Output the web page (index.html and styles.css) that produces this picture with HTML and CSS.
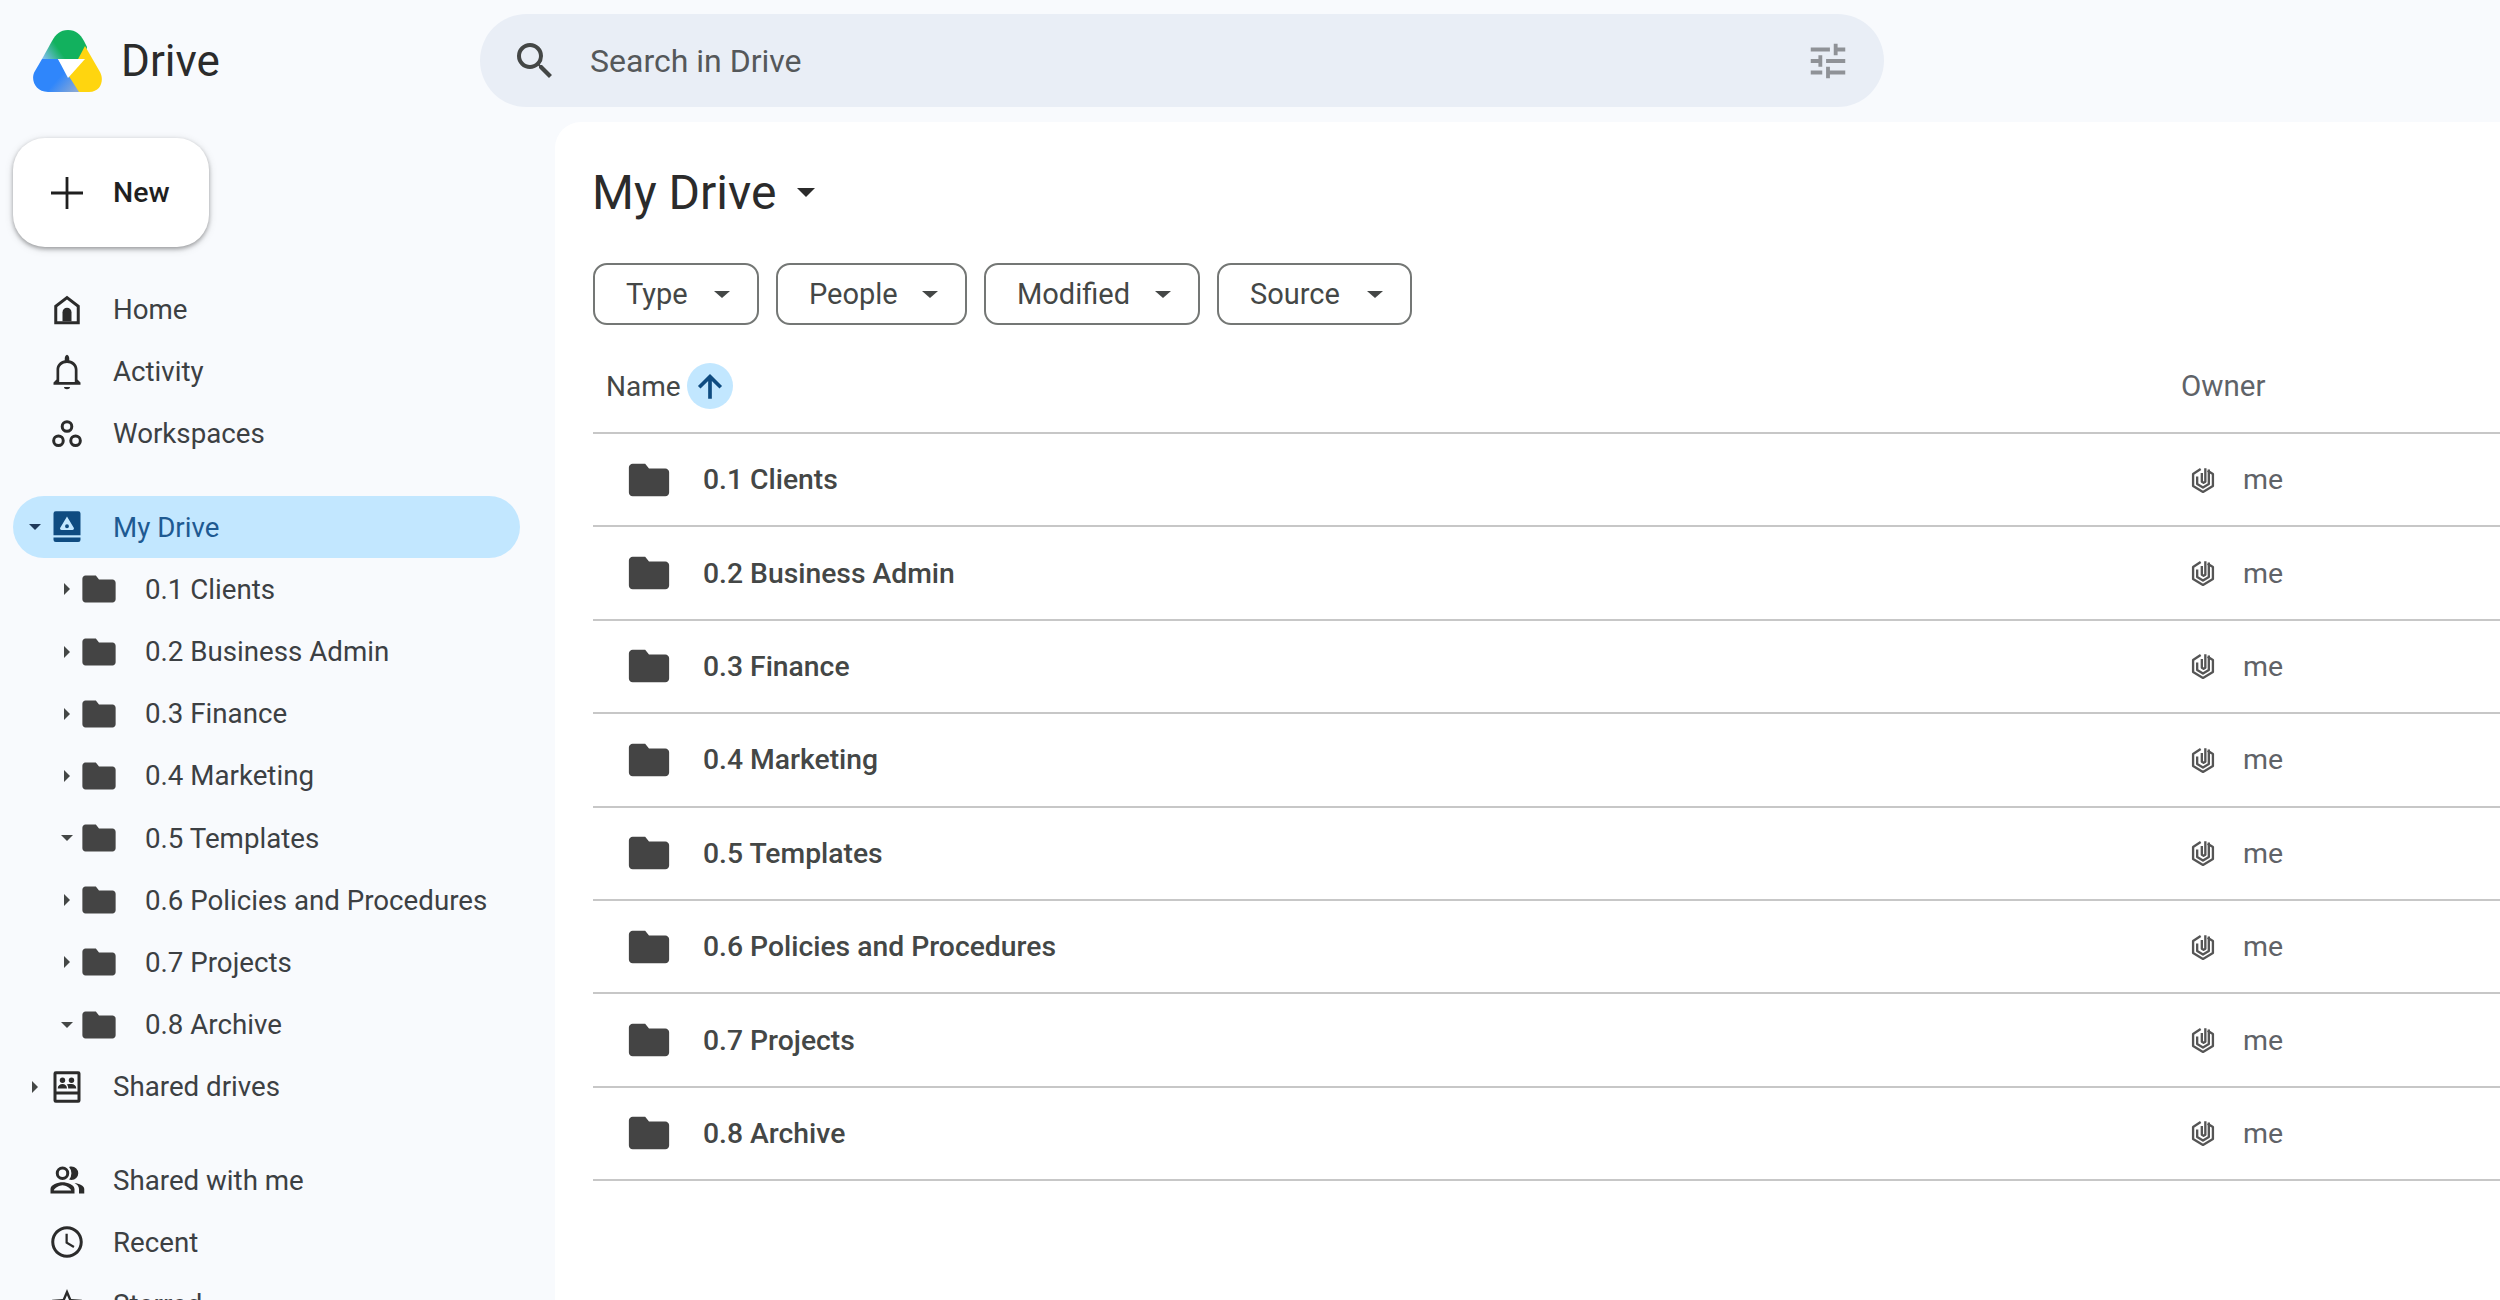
FILE: index.html
```html
<!DOCTYPE html>
<html lang="en">
<head>
    <meta charset="UTF-8">
    <title>My Drive - Google Drive</title>
    <link rel="stylesheet" href="styles.css">
</head>
<body>
    <svg class="sprite" xmlns="http://www.w3.org/2000/svg">
        <symbol id="i-search" viewBox="0 0 24 24"><path d="M15.5 14h-.79l-.28-.27A6.471 6.471 0 0 0 16 9.5 6.5 6.5 0 1 0 9.5 16c1.61 0 3.09-.59 4.23-1.57l.27.28v.79l5 4.99L20.49 19l-4.99-5zm-6 0C7.01 14 5 11.99 5 9.5S7.01 5 9.5 5 14 7.01 14 9.5 11.99 14 9.5 14z"/></symbol>
        <symbol id="i-tune" viewBox="0 0 24 24"><path d="M3 17v2h6v-2H3zM3 5v2h10V5H3zm10 16v-2h8v-2h-8v-2h-2v6h2zM7 9v2H3v2h4v2h2V9H7zm14 4v-2H11v2h10zm-6-4h2V7h4V5h-4V3h-2v6z"/></symbol>
        <symbol id="i-add" viewBox="0 0 24 24"><path d="M20 12.7h-7.3V20h-1.4v-7.3H4v-1.4h7.3V4h1.4v7.3H20z"/></symbol>
        <symbol id="i-home" viewBox="0 0 24 24"><path d="M12 2.5 3.5 9v12.5h17V9L12 2.5zm6.5 17h-13v-9.5L12 5l6.5 5v9.5z"/><path d="M9 13.5a3 3 0 0 1 6 0v6H9z"/></symbol>
        <symbol id="i-bell" viewBox="0 0 24 24"><path d="M12 23.500c1.100 0 2-.5 2-1.500h-4c0 1 .9 1.500 2 1.500zM19 17v-6.500c0-3.070-1.900-5.640-5.500-6.320V3c0-1-.670-2.500-1.500-2.500S10.500 2 10.500 3v1.180C6.900 4.860 5 7.420 5 10.500V17l-2 2v1.500h18V19l-2-2zm-1.800 1.700H6.800V10.500C6.800 8 9 6 12 6s5.200 2 5.200 4.500v8.200z"/></symbol>
        <symbol id="i-workspaces" viewBox="0 0 24 24"><g fill="none" stroke="currentColor" stroke-width="2"><circle cx="12" cy="7" r="3.200"/><circle cx="6.300" cy="16.500" r="3.200"/><circle cx="17.700" cy="16.500" r="3.200"/></g></symbol>
        <symbol id="i-mydrive" viewBox="0 0 24 24"><path fill-rule="evenodd" d="M4.500 1.500h15A1.500 1.500 0 0 1 21 3v14.500H3V3a1.500 1.500 0 0 1 1.500-1.500zM12 5 7.500 12.500a1 1 0 0 0 .9 1.500h7.200a1 1 0 0 0 .9-1.500L12 5zm0 5.200a1.300 1.300 0 1 1 0 2.600 1.300 1.300 0 0 1 0-2.600z"/><path d="M3 19h18v1.500a1.500 1.500 0 0 1-1.500 1.500h-15A1.500 1.500 0 0 1 3 20.500z"/></symbol>
        <symbol id="i-shared-drives" viewBox="0 0 24 24"><path fill-rule="evenodd" d="M4.500 1.500h15A1.500 1.500 0 0 1 21 3v18a1.500 1.500 0 0 1-1.500 1.500h-15A1.500 1.500 0 0 1 3 21V3a1.500 1.500 0 0 1 1.500-1.500zM5 3.500V15h14V3.500zm0 13.500v3.500h14V17z"/><circle cx="9" cy="7.500" r="1.800"/><circle cx="15" cy="7.500" r="1.800"/><path d="M5.800 13c0-2 1.500-3 3.200-3s3 1 3 3zM12.800 13c0-1.200-.3-2-1-2.600.9-.4 2.200-.4 3.200-.4 1.700 0 3.200 1 3.200 3z"/></symbol>
        <symbol id="i-people" viewBox="0 0 24 24"><path d="M9 12a4.500 4.500 0 1 0 0-9 4.500 4.500 0 0 0 0 9zm0-7a2.500 2.500 0 1 1 0 5 2.500 2.500 0 0 1 0-5zM9 13.500c-3 0-8 1.500-8 4.500v3h16v-3c0-3-5-4.500-8-4.500zM3.200 19c.4-1.600 3.700-3.500 5.800-3.500s5.400 1.900 5.800 3.500z"/><path d="M15 3c-.6 0-1.100.100-1.600.300a6.500 6.500 0 0 1 0 8.400c.5.200 1 .300 1.600.300a4.500 4.500 0 1 0 0-9zM17 14c1.800 1 3 2.300 3 4v3h3.500v-3c0-2.300-3.500-3.600-6.500-4z"/></symbol>
        <symbol id="i-clock" viewBox="0 0 24 24"><path d="M11.990 1.500C6.200 1.500 1.500 6.200 1.500 12s4.700 10.500 10.490 10.500C17.800 22.500 22.500 17.800 22.500 12S17.800 1.500 11.990 1.500zM12 20.500c-4.700 0-8.500-3.800-8.500-8.500S7.300 3.500 12 3.500s8.500 3.800 8.500 8.500-3.800 8.500-8.500 8.500zm.5-14H11v6.300l5.250 3.150.75-1.230-4.500-2.670z"/></symbol>
        <symbol id="i-star" viewBox="0 0 24 24"><path d="M22 9.240l-7.190-.62L12 2 9.190 8.630 2 9.240l5.460 4.730L5.820 21 12 17.270 18.180 21l-1.630-7.030L22 9.240zM12 15.400l-3.760 2.270 1-4.280-3.320-2.880 4.380-.38L12 6.100l1.710 4.040 4.380.38-3.320 2.880 1 4.280L12 15.400z"/></symbol>
        <symbol id="i-folder" viewBox="0 0 24 24"><path d="M10 3.500H3.500C2.400 3.500 1.500 4.400 1.500 5.500v13c0 1.100.9 2 2 2h17c1.100 0 2-.9 2-2V8c0-1.100-.9-2-2-2H12l-2-2.500z"/></symbol>
        <symbol id="i-arrow-up" viewBox="0 0 24 24"><path d="M3.500 12l1.800 1.800L10.700 8.400V21h2.600V8.400l5.400 5.400 1.800-1.800L12 3.500 3.500 12z"/></symbol>
        <symbol id="i-owner" viewBox="0 0 24 24"><g fill="none" stroke="currentColor" stroke-width="2" stroke-linejoin="round"><path d="M10 2.500 3.500 6.800v10.400l8.500 5 8.500-5V6.800L16 4"/><path d="M7 9v6.500l5 3 5-3V3"/><path d="M11 6v7.500l1.500.9 1.500-.9V2"/></g></symbol>
    </svg>

    <header class="topbar">
        <div class="brand">
            <svg class="logo" viewBox="0 0 70 63">
                <defs>
                    <linearGradient id="fadeLeft" gradientUnits="userSpaceOnUse" x1="10" y1="30" x2="26" y2="19">
                        <stop offset="0.1" stop-color="#7bbde8"/>
                        <stop offset="1" stop-color="#12b15e"/>
                    </linearGradient>
                    <linearGradient id="fadeBlue" gradientUnits="userSpaceOnUse" x1="26" y1="44" x2="44" y2="60">
                        <stop offset="0.1" stop-color="#2f86fb"/>
                        <stop offset="1" stop-color="#8aa9d6"/>
                    </linearGradient>
                </defs>
                <path fill="url(#fadeLeft)" d="M9 29 19 11C23 4 27 0 35 0c8 0 12 4 16 11l3 6-2 12z"/>
                <path fill="#ffd50f" d="M52 16 67 42c4 7 2 20-11 20H47c-3 0-5-1-6-4L35 48z"/>
                <path fill="url(#fadeBlue)" d="M9 29H25L46 62H15C2 62-3 49 2 41z"/>
                <path fill="#fff" d="M25 29H52L35 48z"/>
            </svg>
            <span class="brand-name">Drive</span>
        </div>
        <div class="search">
            <svg class="search-icon"><use href="#i-search"/></svg>
            <span class="search-text">Search in Drive</span>
            <svg class="tune-icon"><use href="#i-tune"/></svg>
        </div>
    </header>

    <div class="layout">
        <aside class="sidebar">
            <button class="new-button">
                <svg class="icon"><use href="#i-add"/></svg>
                <span>New</span>
            </button>

            <nav class="nav-group">
                <a class="nav-item"><svg class="icon"><use href="#i-home"/></svg><span>Home</span></a>
                <a class="nav-item"><svg class="icon"><use href="#i-bell"/></svg><span>Activity</span></a>
                <a class="nav-item"><svg class="icon"><use href="#i-workspaces"/></svg><span>Workspaces</span></a>
            </nav>

            <nav class="nav-group">
                <a class="nav-item active"><i class="caret down"></i><svg class="icon"><use href="#i-mydrive"/></svg><span>My Drive</span></a>
                <a class="nav-item sub"><i class="caret right"></i><svg class="icon"><use href="#i-folder"/></svg><span>0.1 Clients</span></a>
                <a class="nav-item sub"><i class="caret right"></i><svg class="icon"><use href="#i-folder"/></svg><span>0.2 Business Admin</span></a>
                <a class="nav-item sub"><i class="caret right"></i><svg class="icon"><use href="#i-folder"/></svg><span>0.3 Finance</span></a>
                <a class="nav-item sub"><i class="caret right"></i><svg class="icon"><use href="#i-folder"/></svg><span>0.4 Marketing</span></a>
                <a class="nav-item sub"><i class="caret down"></i><svg class="icon"><use href="#i-folder"/></svg><span>0.5 Templates</span></a>
                <a class="nav-item sub"><i class="caret right"></i><svg class="icon"><use href="#i-folder"/></svg><span>0.6 Policies and Procedures</span></a>
                <a class="nav-item sub"><i class="caret right"></i><svg class="icon"><use href="#i-folder"/></svg><span>0.7 Projects</span></a>
                <a class="nav-item sub"><i class="caret down"></i><svg class="icon"><use href="#i-folder"/></svg><span>0.8 Archive</span></a>
                <a class="nav-item"><i class="caret right"></i><svg class="icon"><use href="#i-shared-drives"/></svg><span>Shared drives</span></a>
            </nav>

            <nav class="nav-group">
                <a class="nav-item"><svg class="icon"><use href="#i-people"/></svg><span>Shared with me</span></a>
                <a class="nav-item"><svg class="icon"><use href="#i-clock"/></svg><span>Recent</span></a>
                <a class="nav-item"><svg class="icon"><use href="#i-star"/></svg><span>Starred</span></a>
            </nav>
        </aside>

        <main class="content">
            <div class="title-row">
                <h1>My Drive</h1>
                <i class="caret down big"></i>
            </div>

            <div class="filters">
                <button class="chip chip-type"><span>Type</span><i class="caret down"></i></button>
                <button class="chip chip-people"><span>People</span><i class="caret down"></i></button>
                <button class="chip chip-modified"><span>Modified</span><i class="caret down"></i></button>
                <button class="chip chip-source"><span>Source</span><i class="caret down"></i></button>
            </div>

            <div class="list-head">
                <div class="col-name">
                    <span>Name</span>
                    <span class="sort"><svg><use href="#i-arrow-up"/></svg></span>
                </div>
                <div class="col-owner">Owner</div>
            </div>

            <div class="row">
                <div class="col-name"><svg class="folder"><use href="#i-folder"/></svg><span>0.1 Clients</span></div>
                <div class="col-owner"><svg class="owner-icon"><use href="#i-owner"/></svg><span>me</span></div>
            </div>
            <div class="row">
                <div class="col-name"><svg class="folder"><use href="#i-folder"/></svg><span>0.2 Business Admin</span></div>
                <div class="col-owner"><svg class="owner-icon"><use href="#i-owner"/></svg><span>me</span></div>
            </div>
            <div class="row">
                <div class="col-name"><svg class="folder"><use href="#i-folder"/></svg><span>0.3 Finance</span></div>
                <div class="col-owner"><svg class="owner-icon"><use href="#i-owner"/></svg><span>me</span></div>
            </div>
            <div class="row">
                <div class="col-name"><svg class="folder"><use href="#i-folder"/></svg><span>0.4 Marketing</span></div>
                <div class="col-owner"><svg class="owner-icon"><use href="#i-owner"/></svg><span>me</span></div>
            </div>
            <div class="row">
                <div class="col-name"><svg class="folder"><use href="#i-folder"/></svg><span>0.5 Templates</span></div>
                <div class="col-owner"><svg class="owner-icon"><use href="#i-owner"/></svg><span>me</span></div>
            </div>
            <div class="row">
                <div class="col-name"><svg class="folder"><use href="#i-folder"/></svg><span>0.6 Policies and Procedures</span></div>
                <div class="col-owner"><svg class="owner-icon"><use href="#i-owner"/></svg><span>me</span></div>
            </div>
            <div class="row">
                <div class="col-name"><svg class="folder"><use href="#i-folder"/></svg><span>0.7 Projects</span></div>
                <div class="col-owner"><svg class="owner-icon"><use href="#i-owner"/></svg><span>me</span></div>
            </div>
            <div class="row">
                <div class="col-name"><svg class="folder"><use href="#i-folder"/></svg><span>0.8 Archive</span></div>
                <div class="col-owner"><svg class="owner-icon"><use href="#i-owner"/></svg><span>me</span></div>
            </div>
        </main>
    </div>
</body>
</html>
```

FILE: styles.css
```css
* {
    box-sizing: border-box;
}
html, body {
    height: 100%;
}
body {
    margin: 0;
    overflow: hidden;
    background-color: #f8fafd;
    color: #1f1f1f;
    font-family: Roboto, "Noto Sans", sans-serif;
    font-size: 27.7px;
}
.sprite {
    display: none;
}
svg {
    fill: currentColor;
}

/* top bar */
.topbar {
    display: flex;
    align-items: flex-start;
    height: 122px;
}
.brand {
    display: flex;
    align-items: center;
    width: 480px;
    height: 122px;
    padding-left: 33px;
}
.logo {
    width: 70px;
    height: 63px;
}
.brand-name {
    margin-left: 18px;
    font-size: 44px;
    color: #2b2b2b;
}
.search {
    display: flex;
    align-items: center;
    width: 1404px;
    height: 93px;
    margin-top: 14px;
    padding: 0 33px 0 31px;
    border-radius: 47px;
    background-color: #e9eef6;
}
.search-icon {
    width: 48px;
    height: 48px;
    color: #444746;
}
.search-text {
    flex: 1;
    margin-left: 31px;
    font-size: 32px;
    color: #55585a;
}
.tune-icon {
    width: 46px;
    height: 46px;
    color: #8f9297;
}

/* sidebar */
.layout {
    display: flex;
    height: calc(100% - 122px);
}
.sidebar {
    flex: 0 0 555px;
    padding: 16px 0 0 13px;
}
.new-button {
    display: flex;
    align-items: center;
    width: 196px;
    height: 109px;
    padding: 0 0 0 30px;
    border: none;
    border-radius: 32px;
    background-color: #fff;
    box-shadow: 0 2px 4px rgba(0, 0, 0, 0.32), 0 2px 10px rgba(0, 0, 0, 0.12);
    color: #1f1f1f;
    font: 500 28.5px Roboto, sans-serif;
}
.new-button .icon {
    width: 48px;
    height: 48px;
    margin-right: 22px;
}
.nav-group {
    margin-top: 31.5px;
}
.nav-group + .nav-group {
    margin-top: 31px;
}
.nav-item {
    display: flex;
    align-items: center;
    position: relative;
    width: 507px;
    height: 62.2px;
    padding-left: 36px;
    border-radius: 31px;
    color: #3c4043;
}
.nav-item .icon {
    width: 36px;
    height: 36px;
    margin-right: 28px;
    color: #2b2b2b;
}
.nav-item.sub {
    padding-left: 67px;
}
.nav-item.sub .icon {
    width: 38px;
    height: 38px;
    margin-right: 27px;
    color: #444;
}
.nav-item.active {
    background-color: #c2e7ff;
    color: #1e5a92;
}
.nav-item.active .icon {
    color: #0f4c81;
}

/* small triangles */
.caret {
    display: block;
    flex: none;
    width: 0;
    height: 0;
}
.caret.down {
    border-left: 6px solid transparent;
    border-right: 6px solid transparent;
    border-top: 6px solid #444746;
}
.caret.right {
    border-top: 6px solid transparent;
    border-bottom: 6px solid transparent;
    border-left: 6px solid #444746;
}
.nav-item .caret {
    position: absolute;
    left: 16px;
}
.nav-item .caret.right {
    left: 19px;
}
.nav-item.sub .caret {
    left: 48px;
}
.nav-item.sub .caret.right {
    left: 51px;
}
.nav-item.active .caret {
    border-top-color: #1f3a5a;
}

/* main panel */
.content {
    flex: 1;
    padding: 39px 0 0 38px;
    border-radius: 26px 0 0 0;
    background-color: #fff;
}
.title-row {
    display: flex;
    align-items: center;
    height: 62px;
}
h1 {
    margin: 0 0 0 -1px;
    font-size: 48px;
    font-weight: 400;
    color: #2b2b2b;
}
.caret.big {
    margin-left: 21px;
    border-left-width: 9px;
    border-right-width: 9px;
    border-top-width: 9px;
    border-top-color: #2b2b2b;
}
.filters {
    display: flex;
    gap: 17px;
    margin-top: 40px;
}
.chip {
    display: flex;
    align-items: center;
    justify-content: space-between;
    height: 62px;
    padding: 0 27px 0 31px;
    border: 2px solid #747775;
    border-radius: 14px;
    background-color: #fff;
    color: #444746;
    font: 400 29px Roboto, sans-serif;
}
.chip .caret {
    border-left-width: 8px;
    border-right-width: 8px;
    border-top-width: 7px;
}
.chip-type { width: 166px; }
.chip-people { width: 191px; }
.chip-modified { width: 216px; }
.chip-source { width: 195px; }

/* file list */
.list-head, .row {
    display: flex;
    align-items: center;
    border-bottom: 2px solid #c7c7c7;
}
.list-head {
    height: 94px;
    margin-top: 15px;
    font-size: 28px;
    color: #444746;
}
.row {
    height: 93.4px;
    color: #444746;
    font-weight: 500;
    font-size: 28.3px;
}
.col-name {
    display: flex;
    align-items: center;
    flex: 0 0 1588px;
}
.col-owner {
    display: flex;
    align-items: center;
    font-size: 29.5px;
    font-weight: 400;
    color: #5f6368;
}
.row .col-owner {
    font-size: 28.5px;
}
.list-head .col-name {
    padding-left: 13px;
}
.sort {
    display: flex;
    align-items: center;
    justify-content: center;
    width: 46px;
    height: 46px;
    margin-left: 6px;
    border-radius: 50%;
    background-color: #c2e7ff;
}
.sort svg {
    width: 34px;
    height: 34px;
    color: #0f4c81;
}
.folder {
    width: 46px;
    height: 46px;
    margin-left: 33px;
    margin-right: 31px;
    color: #444;
}
.owner-icon {
    width: 28px;
    height: 28px;
    margin: 0 26px 0 8px;
    color: #555;
}
```
